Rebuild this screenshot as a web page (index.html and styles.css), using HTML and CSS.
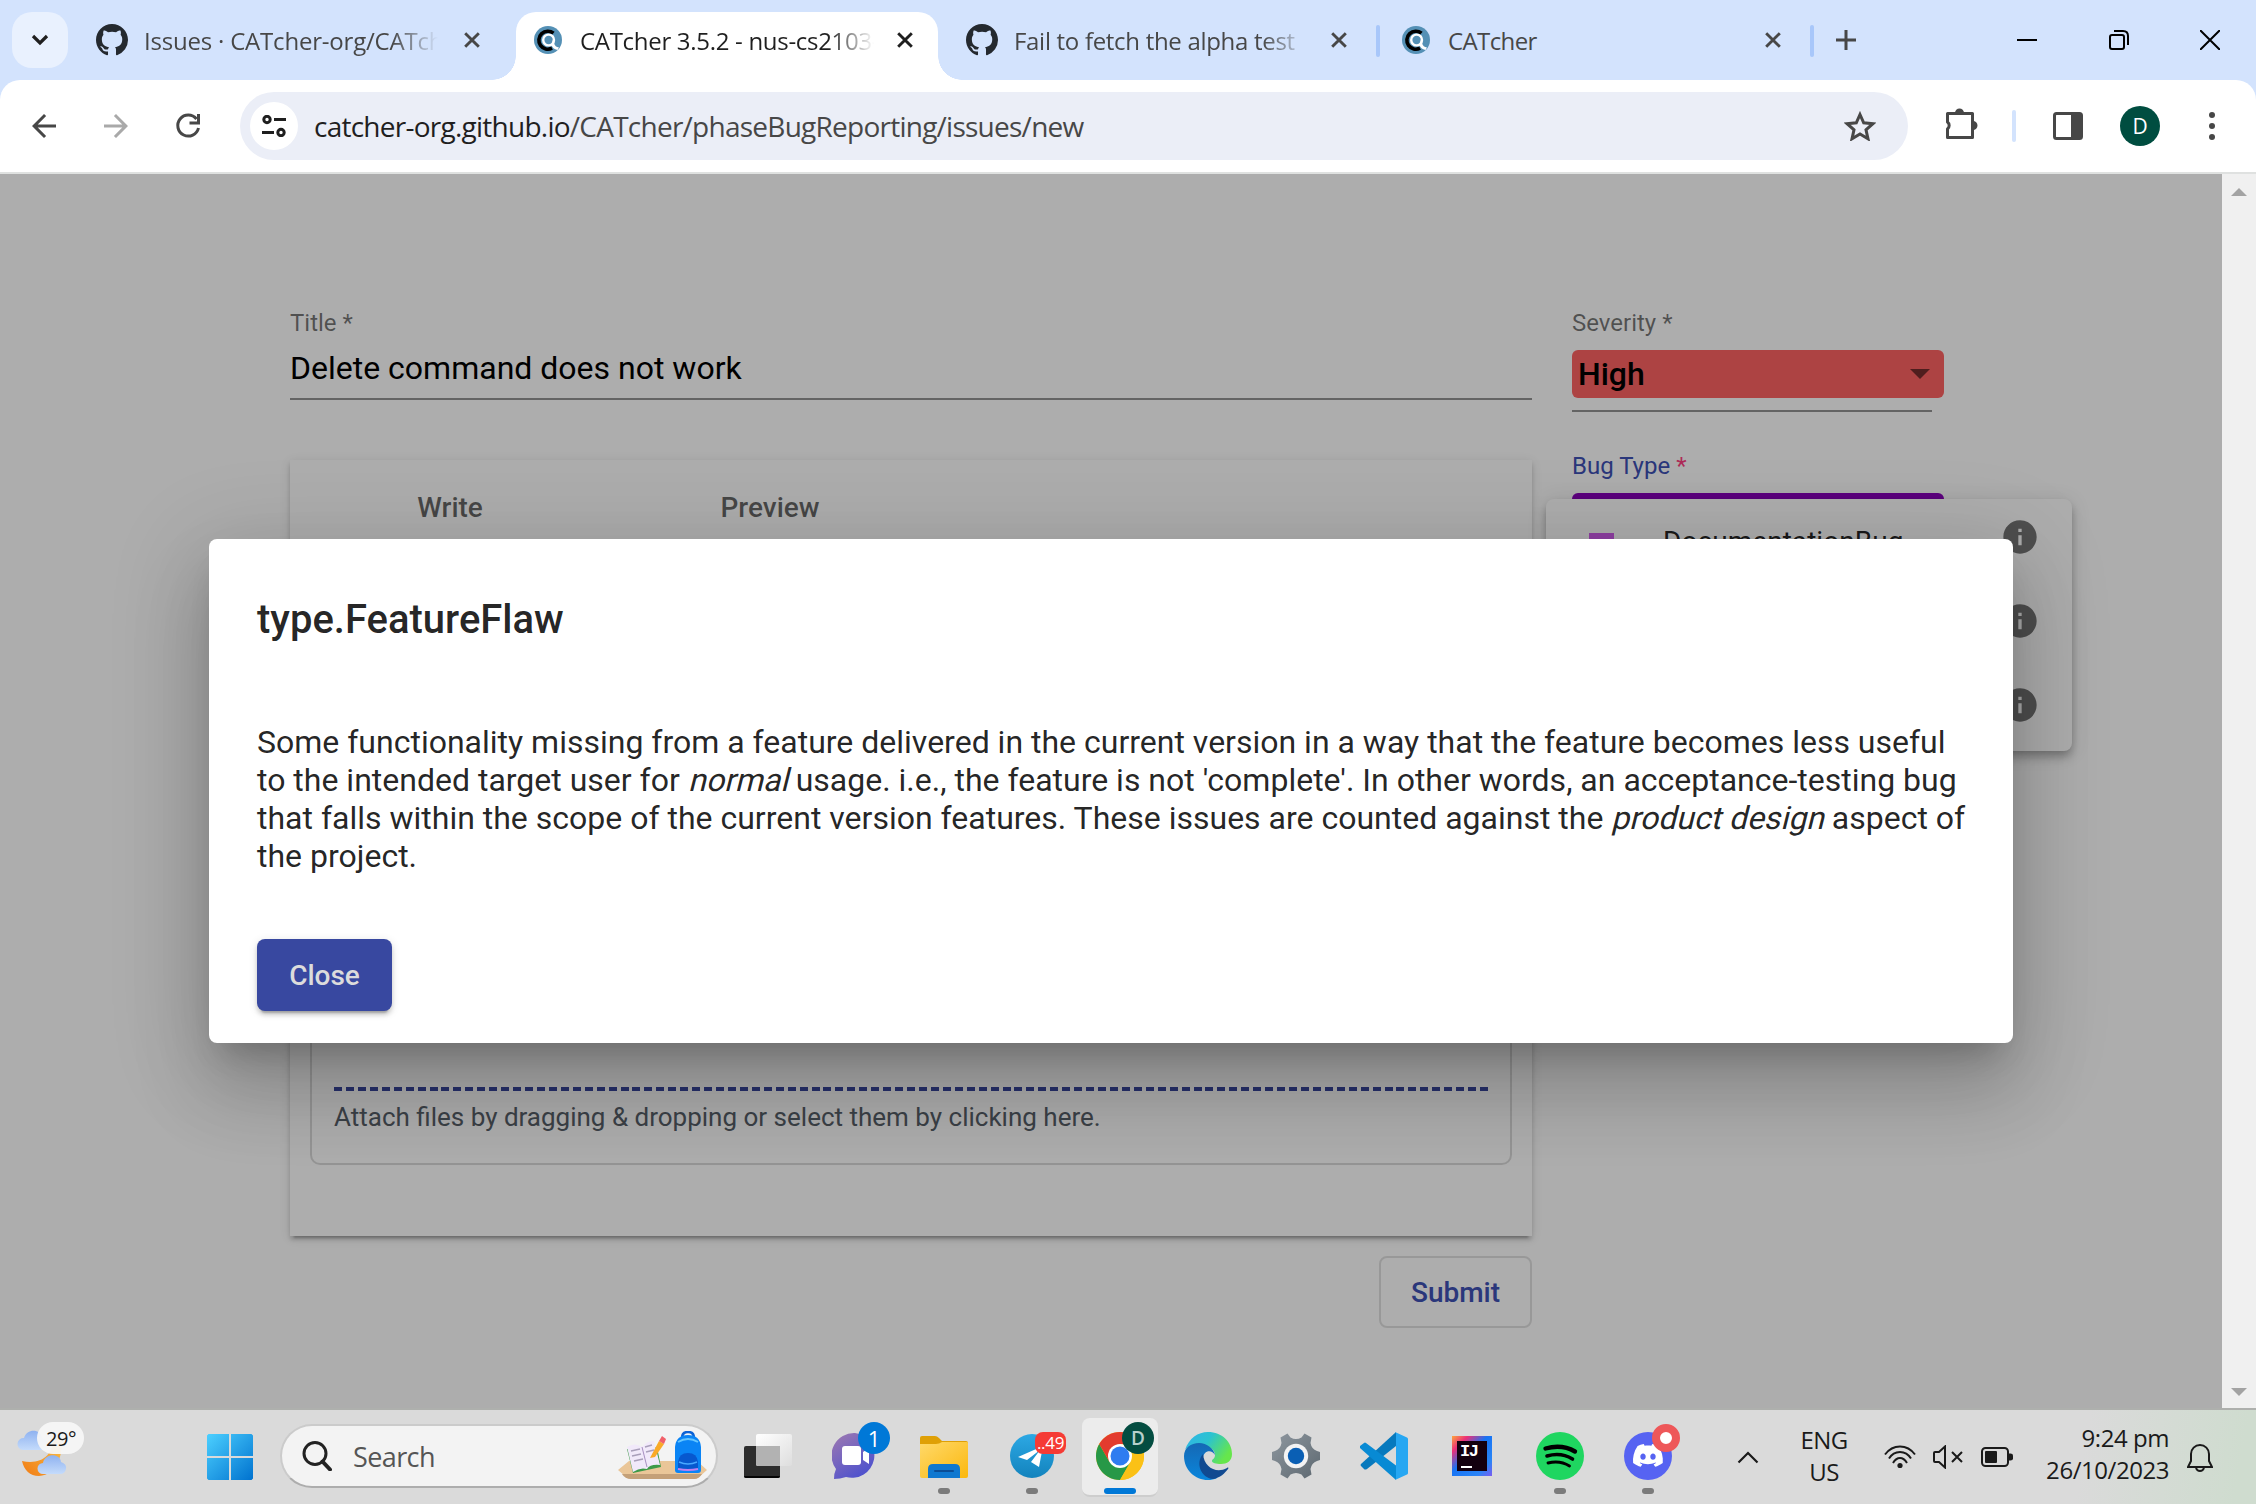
FILE: index.html
```html
<!DOCTYPE html>
<html lang="en">
<head>
<meta charset="utf-8">
<title>CATcher 3.5.2 - nus-cs2103</title>
<link rel="stylesheet" href="styles.css">
</head>
<body>
<svg class="defs" aria-hidden="true">
  <defs>
    <symbol id="github" viewBox="0 0 16 16"><path fill="#24292f" d="M8 0C3.58 0 0 3.58 0 8c0 3.54 2.29 6.53 5.47 7.59.4.07.55-.17.55-.38 0-.19-.01-.82-.01-1.49-2.01.37-2.53-.49-2.69-.94-.09-.23-.48-.94-.82-1.13-.28-.15-.68-.52-.01-.53.63-.01 1.08.58 1.23.82.72 1.21 1.87.87 2.33.66.07-.52.28-.87.51-1.07-1.78-.2-3.64-.89-3.64-3.95 0-.87.31-1.59.82-2.15-.08-.2-.36-1.02.08-2.12 0 0 .67-.21 2.2.82.64-.18 1.32-.27 2-.27.68 0 1.36.09 2 .27 1.53-1.04 2.2-.82 2.2-.82.44 1.1.16 1.92.08 2.12.51.56.82 1.27.82 2.15 0 3.07-1.87 3.75-3.65 3.95.29.25.54.73.54 1.48 0 1.07-.01 1.93-.01 2.2 0 .21.15.46.55.38A8.013 8.013 0 0016 8c0-4.42-3.58-8-8-8z"/></symbol>
    <symbol id="catcher" viewBox="0 0 28 28"><circle cx="14" cy="14" r="14" fill="#5490b5"/><path d="M19.5 7.2A9 9 0 1 0 18 22.2" fill="none" stroke="#000" stroke-width="3.6"/><circle cx="14.6" cy="14" r="5.4" fill="none" stroke="#fff" stroke-width="2.4"/><path d="M20 9v8q1 4 5 4.500l-1.500 2.500q-5-1-6-5" fill="#fff"/></symbol>
    <symbol id="x" viewBox="0 0 16 16"><path d="M1.200 1.200l13.600 13.600M14.800 1.200L1.200 14.800" fill="none" stroke="currentColor" stroke-width="2.900"/></symbol>
    <symbol id="info" viewBox="0 0 24 24"><path fill="#757575" d="M12 2C6.480 2 2 6.480 2 12s4.480 10 10 10 10-4.480 10-10S17.520 2 12 2zm1 15h-2v-6h2v6zm0-8h-2V7h2v2z"/></symbol>
  </defs>
</svg>

<header class="browser">
  <div class="tabstrip">
    <div class="tab-search"><svg width="18" height="12" viewBox="0 0 18 12"><path d="M2 2l7 7 7-7" fill="none" stroke="#1f1f1f" stroke-width="3.200"/></svg></div>
    <div class="tab tab-first"><span class="fav"><svg width="32" height="32"><use href="#github"/></svg></span><span class="tab-text t1">Issues · CATcher-org/CATch</span><svg class="close" width="16" height="16"><use href="#x"/></svg></div>
    <div class="tab active"><span class="fav"><svg width="28" height="28"><use href="#catcher"/></svg></span><span class="tab-text t2">CATcher 3.5.2 - nus-cs2103-</span><svg class="close" width="16" height="16"><use href="#x"/></svg></div>
    <div class="tab divided"><span class="fav"><svg width="32" height="32"><use href="#github"/></svg></span><span class="tab-text t3">Fail to fetch the alpha test</span><svg class="close" width="16" height="16"><use href="#x"/></svg></div>
    <div class="tab tab-last divided"><span class="fav"><svg width="28" height="28"><use href="#catcher"/></svg></span><span class="tab-text t4">CATcher</span><svg class="close" width="16" height="16"><use href="#x"/></svg></div>
    <svg class="plus" width="20" height="20"><path d="M10 0v20M0 10h20" stroke="#474747" stroke-width="3"/></svg>
    <div class="window-buttons">
      <svg width="20" height="20"><path d="M0 10h20" stroke="#000" stroke-width="2"/></svg>
      <svg width="20" height="20" fill="none" stroke="#000" stroke-width="2"><rect x="1" y="5" width="14" height="14" rx="2"/><path d="M5 1h9q5 0 5 5v9"/></svg>
      <svg width="20" height="20"><path d="M0 0l20 20M20 0L0 20" stroke="#000" stroke-width="2"/></svg>
    </div>
  </div>
  <div class="toolbar-wrap">
    <div class="toolbar">
      <svg class="nav" width="36" height="36" viewBox="0 0 24 24"><path fill="#474747" d="M20 11H7.830l5.590-5.590L12 4l-8 8 8 8 1.410-1.410L7.830 13H20v-2z"/></svg>
      <svg class="nav" width="36" height="36" viewBox="0 0 24 24"><path fill="#a9a9a9" d="M4 13h12.170l-5.590 5.590L12 20l8-8-8-8-1.410 1.410L16.170 11H4v2z"/></svg>
      <svg class="nav" width="36" height="36" viewBox="0 0 36 36"><path d="M26.500 11A10.500 10.500 0 1 0 28.500 20" fill="none" stroke="#474747" stroke-width="3"/><path d="M28.500 6v9H19.500" fill="none" stroke="#474747" stroke-width="3"/></svg>
      <div class="omnibox">
        <span class="site"><svg width="24" height="22" viewBox="0 0 24 22" fill="none" stroke="#1f1f1f" stroke-width="3"><circle cx="5" cy="4.500" r="3.200"/><path d="M12 4.500h12M0 17.500h12"/><circle cx="19" cy="17.500" r="3.200"/></svg></span>
        <span class="url"><b>catcher-org.github.io</b>/CATcher/phaseBugReporting/issues/new</span>
        <svg class="star" width="32" height="30" viewBox="0 0 32 30"><path d="M16 3.500l3.700 8.300 9.200.9-6.900 6.100 2 9L16 23l-8 4.800 2-9-6.900-6.100 9.200-.9z" fill="none" stroke="#474747" stroke-width="3"/></svg>
      </div>
      <svg class="puzzle" width="34" height="34" viewBox="0 0 34 34"><path d="M3.500 6.500h25v24h-25v-8.500a4.500 4.500 0 0 0 0-7z" fill="none" stroke="#474747" stroke-width="3" stroke-linejoin="round"/><path d="M11 6a4.500 4.500 0 0 1 9 0zM29 14a4.500 4.500 0 0 1 0 9z" fill="#474747"/></svg>
      <span class="bar"></span>
      <svg class="panel-icon" width="30" height="28"><rect x="1.500" y="1.500" width="27" height="25" rx="2" fill="none" stroke="#474747" stroke-width="3"/><path d="M18 1h10v26H18z" fill="#474747"/></svg>
      <span class="avatar">D</span>
      <svg class="dots" width="6" height="28" fill="#474747"><circle cx="3" cy="3" r="3"/><circle cx="3" cy="14" r="3"/><circle cx="3" cy="25" r="3"/></svg>
    </div>
  </div>
</header>

<div class="viewport">
  <main class="page">
    <section class="main-col">
      <label class="label">Title *</label>
      <div class="input">Delete command does not work</div>
      <div class="line"></div>
      <div class="card">
        <div class="tabs"><span>Write</span><span>Preview</span></div>
        <div class="editor">
          <div class="dashes"></div>
          <div class="attach">Attach files by dragging &amp; dropping or select them by clicking here.</div>
        </div>
      </div>
      <div class="actions"><button class="submit">Submit</button></div>
    </section>
    <aside class="side-col">
      <label class="label">Severity *</label>
      <div class="select high">High<i class="arrow"></i></div>
      <div class="line"></div>
      <label class="label bug">Bug Type <em>*</em></label>
      <div class="select purple"></div>
    </aside>
    <div class="options">
      <div class="option"><i class="swatch"></i><span>DocumentationBug</span><svg width="40" height="40"><use href="#info"/></svg></div>
      <div class="option"><svg width="40" height="40"><use href="#info"/></svg></div>
      <div class="option"><svg width="40" height="40"><use href="#info"/></svg></div>
    </div>
    <div class="backdrop"></div>
    <div class="dialog">
      <h2>type.FeatureFlaw</h2>
      <p>Some functionality missing from a feature delivered in the current version in a way that the feature becomes less useful<br>to the intended target user for <i>normal</i> usage. i.e., the feature is not 'complete'. In other words, an acceptance-testing bug<br>that falls within the scope of the current version features. These issues are counted against the <i>product design</i> aspect of<br>the project.</p>
      <button class="close-btn">Close</button>
    </div>
  </main>
  <div class="scrollbar"><i class="up"></i><i class="down"></i></div>
</div>

<footer class="taskbar">
  <div class="weather">
    <svg width="70" height="64" viewBox="0 0 70 64">
      <defs><linearGradient id="moon" x1="0" y1="1" x2="1" y2="0"><stop offset="0" stop-color="#f07a13"/><stop offset="1" stop-color="#fbc44a"/></linearGradient><linearGradient id="cloud" x1="0" y1="0" x2="0" y2="1"><stop offset="0" stop-color="#8fb2f0"/><stop offset="1" stop-color="#c4dbfb"/></linearGradient></defs>
      <path d="M47 14c3 14-4 36-22 37-9 0-15-6-17-15 18 4 32-5 31-24z" fill="url(#moon)"/>
      <path d="M9 25a6 6 0 0 1 1-12C13 3 27 4 28 13q8 2 7 12z" fill="url(#cloud)"/>
      <path d="M29 49a5.500 5.500 0 0 1 0-11c2-10 17-10 18-1q6 2 5 7-1 5-6 5z" fill="url(#cloud)"/>
    </svg>
    <span class="temp">29°</span>
  </div>
  <svg class="start" width="46" height="46" viewBox="0 0 46 46"><defs><linearGradient id="win" x1="0" y1="0" x2="1" y2="1" gradientUnits="objectBoundingBox"><stop offset="0" stop-color="#4cd0ff"/><stop offset="1" stop-color="#0072cf"/></linearGradient></defs><path fill="url(#win)" d="M1.500 0H22v22H0V1.500zM24 0h20.500L46 1.500V22H24zM0 24h22v22H1.500L0 44.500zM24 24h22v20.500L44.500 46H24z"/></svg>
  <div class="search">
    <svg width="30" height="30" viewBox="0 0 30 30" fill="none" stroke="#222"><circle cx="13" cy="12.500" r="11" stroke-width="3"/><path d="M20.500 20.500L28 28.500" stroke-width="4" stroke-linecap="round"/></svg>
    <span>Search</span>
    <svg class="school" width="92" height="50" viewBox="0 0 92 50">
      <path d="M12 30h68l10 9-8 7q-2 2-5 2H16q-5 0-8-3l-7-6z" fill="#eac698"/><path d="M5 43h80q-3 5-8 5H14q-6 0-9-5z" fill="#c4a078"/>
      <path d="M10 18l30-2 4 20-28 6z" fill="#3d9a49"/><path d="M10 16q8-5 15 0 6-7 12-6l6 24q-10-1-13 4-7-2-14 3z" fill="#f1e9fa"/><path d="M25 16l5 20" stroke="#a78fc0"/><path d="M14 20l9-2M15 25l9-2M17 30l9-2M28 16l7-2M29 21l8-2" stroke="#a99fba" stroke-width="1.500"/>
      <path d="M34 25l8-15 5 3-9 13-5 1z" fill="#f9a928"/><path d="M42 10l3-5 4 3-2 5z" fill="#f1606a"/>
      <path d="M65 7q0-6 6-6t6 6" fill="none" stroke="#0b62d6" stroke-width="2.500"/><path d="M58 16q1-12 13-12t13 12v23q0 3-3 3H61q-3 0-3-3z" fill="#0a84f5"/><path d="M61 11q10-6 20 0" fill="none" stroke="#65c6ff" stroke-width="2"/><path d="M61 31q1-9 10-9t10 9v8H61z" fill="#0758cf"/><path d="M62 31q9 4 18 0" fill="none" stroke="#49a8ff" stroke-width="1.500"/><path d="M61 38q10 2 20 0" fill="none" stroke="#c080f0" stroke-width="2"/>
    </svg>
  </div>
  <nav class="apps">
    <div class="app"><svg width="48" height="48" viewBox="0 0 48 48"><defs><linearGradient id="tv" x1="0" y1="0" x2="1" y2="1"><stop offset="0" stop-color="#fff"/><stop offset="1" stop-color="#dedede"/></linearGradient></defs><rect y="14" width="36" height="32" rx="2" fill="#2d2d2d"/><path d="M0 44h36v0q0 2-2 2H2q-2 0-2-2z" fill="#050505"/><rect x="12" y="2" width="36" height="32" rx="2" fill="url(#tv)"/><path d="M12 14h24v20H14q-2 0-2-2z" fill="#b2b2b2"/></svg></div>
    <div class="app"><svg width="48" height="48" viewBox="0 0 48 48"><defs><linearGradient id="teams" x1="0" y1="0" x2=".6" y2="1"><stop offset="0" stop-color="#a07ab0"/><stop offset="1" stop-color="#4f52cd"/></linearGradient></defs><path d="M23 1a22.500 22.500 0 1 1-9 44q-6 2-12 2 0-6 2-10A22.500 22.500 0 0 1 23 1z" fill="url(#teams)"/><rect x="10" y="14" width="19" height="19" rx="3" fill="#fff"/><path d="M31 20l6-4v16l-6-4z" fill="#fff"/></svg><span class="badge blue">1</span></div>
    <div class="app run"><svg width="48" height="48" viewBox="0 0 48 48"><defs><linearGradient id="fold" x1="0" y1="0" x2="1" y2="1"><stop offset="0" stop-color="#ffd96a"/><stop offset="1" stop-color="#fbb80e"/></linearGradient></defs><path d="M0 12V6q0-2 2-2h13q2 0 4 2l3 3h24q2 0 2 2v5H0z" fill="#dfa006"/><path d="M0 12h16q3 0 6-2h25q1 0 1 1v33q0 2-2 2H2q-2 0-2-2z" fill="url(#fold)"/><path d="M8 46V37q0-5 5-5h22q5 0 5 5v9z" fill="#0f78d0"/><path d="M15 39h18" stroke="#0a4d96" stroke-width="2" stroke-linecap="round"/></svg></div>
    <div class="app run"><svg width="48" height="48" viewBox="0 0 48 48"><defs><linearGradient id="tg" x1="0" y1="0" x2="0" y2="1"><stop offset="0" stop-color="#2ca8e4"/><stop offset="1" stop-color="#1383bd"/></linearGradient></defs><circle cx="24" cy="24" r="22" fill="url(#tg)"/><path d="M10 25L35 14l-4 21-8-5 9-12-13 10z" fill="#fff"/></svg><span class="badge red">..49</span></div>
    <div class="app current"><svg width="48" height="48" viewBox="0 0 48 48"><circle cx="24" cy="24" r="24" fill="#fbbc0c"/><path d="M24 24L44.780 12A24 24 0 0 0 3.220 12z" fill="#e33b2e"/><path d="M3.220 12A24 24 0 0 0 24 48l10.400-18L24 24 13.600 30z" fill="#279847"/><path d="M3.220 12L13.600 30 24 24V12z" fill="#e33b2e"/><path d="M24 12h20.780A24 24 0 0 1 24 48l10.400-18z" fill="#fbc116"/><circle cx="24" cy="24" r="12" fill="#fff"/><circle cx="24" cy="24" r="9.500" fill="#2f7cf0"/></svg><span class="badge green">D</span></div>
    <div class="app"><svg width="48" height="48" viewBox="0 0 48 48"><defs><linearGradient id="e1" x1="0" y1="0" x2="1" y2=".5"><stop offset="0" stop-color="#2fb4ea"/><stop offset=".5" stop-color="#2cc3cf"/><stop offset="1" stop-color="#66e64c"/></linearGradient><linearGradient id="e2" x1="0" y1="0" x2="0" y2="1"><stop offset="0" stop-color="#1568b4"/><stop offset="1" stop-color="#0a86dc"/></linearGradient></defs><path d="M1 18C5 6 14 0 24 0c14 0 24 10 24 22 0 7-5 10-11 10-5 0-9-1-9-3s3-2 3-6c0-5-5-9-12-9C11 12 4 14 1 18z" fill="url(#e1)"/><path d="M0 24c0-8 7-13 15-13s15 6 16 12c-3-6-12-5-12 4 0 8 6 18 14 19-3 1.500-6 2-9 2C11 48 0 38 0 24z" fill="url(#e2)"/><path d="M19 22c-8 9-2 24 10 25 7-1 12-6 15-10 1-1 0-2-1-1-11 6-23-1-24-14z" fill="#114a91"/></svg></div>
    <div class="app"><svg width="48" height="48" viewBox="0 0 48 48"><defs><linearGradient id="gear" x1="0" y1="0" x2="1" y2="1"><stop offset="0" stop-color="#8e979f"/><stop offset="1" stop-color="#5d6870"/></linearGradient></defs><path d="M15.500 1.500l3 4q5.500 3 11 0l3-4 7 4-1 5.500q1 6 6.500 8l3 1v8l-3 1q-5.500 2-6.500 8l1 5.500-7 4-3-4q-5.500-3-11 0l-3 4-7-4 1-5.500q-1-6-6.500-8l-3-1v-8l3-1q5.500-2 6.500-8l-1-5.500z" fill="url(#gear)"/><circle cx="24" cy="24" r="12.200" fill="#f3f3f3"/><circle cx="24" cy="24" r="8.200" fill="#0a5fb4"/></svg></div>
    <div class="app"><svg width="48" height="48" viewBox="0 0 48 48"><path d="M36 0L1 32q-1 1 0 2l3 3q1 1 3 0L36 14z" fill="#0779bd"/><path d="M36 48L0 16q-1-1 0-2l4-3q1-1 2 0l30 22.500z" fill="#088ad4"/><path d="M35 0l12 5.500q1 .5 1 1.500v34q0 1-1 1.500L35 48q1-.5 1-2V2q0-1.500-1-2z" fill="#27a7f2"/></svg></div>
    <div class="app"><svg width="48" height="48" viewBox="0 0 48 48"><defs><linearGradient id="ij" x1="0" y1="0" x2="1" y2="1"><stop offset="0" stop-color="#fda63c"/><stop offset=".2" stop-color="#ec2f78"/><stop offset=".45" stop-color="#1774f4"/><stop offset=".8" stop-color="#2a84f6"/><stop offset="1" stop-color="#7b5cf0"/></linearGradient></defs><rect x="4" y="4" width="40" height="40" fill="url(#ij)"/><rect x="9" y="9" width="30" height="30" fill="#14000f"/><path d="M13 35h11" stroke="#fff" stroke-width="2"/><text x="12" y="24" class="ij">IJ</text></svg></div>
    <div class="app run"><svg width="48" height="48" viewBox="0 0 48 48"><circle cx="24" cy="24" r="24" fill="#1fd660"/><g fill="none" stroke="#000" stroke-linecap="round"><path d="M9.500 16.500Q26 12 39 19.500" stroke-width="4.400"/><path d="M11 24q14-4 25.500 3" stroke-width="3.600"/><path d="M12 31q12-3 21.500 3" stroke-width="2.900"/></g></svg></div>
    <div class="app run"><svg width="48" height="48" viewBox="0 0 48 48"><circle cx="24" cy="24" r="24" fill="#5663f2"/><path transform="translate(9 8.500) scale(1.250)" fill="#fff" d="M20.317 4.370a19.790 19.790 0 0 0-4.885-1.515c-.3.300-.5.900-.687 1.287-1.845-.276-3.680-.276-5.487 0-.164-.393-.406-.874-.696-1.287A19.740 19.740 0 0 0 3.677 4.370C.533 9.046-.319 13.580.099 18.058c2.053 1.508 4.041 2.423 6.077 3.029.5-.6.900-1.300 1.226-1.994-.7-.3-1.300-.6-1.914-.998l.364-.419c3.928 1.793 8.180 1.793 12.139 0l.373.302c-.6.400-1.200.7-1.873 1.020.3.700.7 1.400 1.268 2.100 1.961-.607 3.950-1.522 6.034-3.030.5-5.177-.838-9.674-3.476-13.698zM8.020 15.331c-1.182 0-2.157-1.086-2.157-2.419s.956-2.419 2.157-2.419c1.211 0 2.176 1.095 2.157 2.419 0 1.333-.956 2.419-2.157 2.419zm7.975 0c-1.183 0-2.157-1.086-2.157-2.419s.955-2.419 2.157-2.419c1.211 0 2.176 1.095 2.157 2.419 0 1.333-.946 2.419-2.157 2.419z"/></svg><span class="badge ring"></span></div>
  </nav>
  <div class="tray">
    <svg class="chev" width="22" height="13"><path d="M1.500 11.500L11 2l9.500 9.500" fill="none" stroke="#1a1a1a" stroke-width="2.200"/></svg>
    <div class="lang">ENG<br>US</div>
    <svg class="wifi" width="32" height="24" viewBox="0 0 32 24" fill="none" stroke="#1a1a1a" stroke-width="2"><path d="M1 9.500Q7 1.500 16 1.500T31 9.500M5 13.500Q9 7 16 7t11 6.500M9 18q3-5 7-5t7 5"/><circle cx="16" cy="20.500" r="2.600" fill="#1a1a1a" stroke="none"/></svg>
    <svg class="sound" width="30" height="24" viewBox="0 0 30 24" fill="none" stroke="#1a1a1a" stroke-width="2"><path d="M1 8q0-1 1-1h4l6-5.500v21L6 17H2q-1 0-1-1zM19 7l10 10M29 7L19 17"/></svg>
    <svg class="battery" width="32" height="20" viewBox="0 0 32 20"><rect x="1" y="1" width="26" height="18" rx="3.500" fill="none" stroke="#1a1a1a" stroke-width="2"/><rect x="4" y="4" width="12" height="12" rx="1" fill="#1a1a1a"/><path d="M28 6.500h1.500q2.500 0 2.500 2v3q0 2-2.500 2H28z" fill="#1a1a1a"/></svg>
    <div class="clock">9:24 pm<br>26/10/2023</div>
    <svg class="bell" width="26" height="29" viewBox="0 0 26 29" fill="none" stroke="#1a1a1a" stroke-width="2"><path d="M4 11a9 9 0 0 1 18 0v7l3 6H1l3-6zM9 25q1 3 4 3t4-3"/></svg>
  </div>
</footer>
</body>
</html>
```
FILE: styles.css
```css
* { box-sizing: border-box; }
body { margin: 0; width: 2256px; height: 1504px; overflow: hidden; font-family: Roboto, "Liberation Sans", sans-serif; }
svg { display: block; flex: none; }
button { font: inherit; margin: 0; padding: 0; }
.defs { position: absolute; width: 0; height: 0; }

/* browser frame */
.browser, .taskbar { font-family: "Open Sans", "Noto Sans", sans-serif; }
.browser { height: 174px; background: #d3e3fd; }
.tabstrip { display: flex; align-items: center; height: 80px; padding-left: 12px; }
.tab-search { width: 56px; height: 56px; border-radius: 20px; background: #e9f1fe; display: flex; align-items: center; justify-content: center; }
.tab { position: relative; display: flex; align-items: center; width: 434px; height: 68px; margin-top: 12px; padding: 0 0 12px 16px; color: #474747; font-size: 24px; }
.tab-first { width: 436px; margin-left: 12px; }
.tab-last { width: 430px; }
.fav { width: 32px; display: flex; justify-content: center; }
.tab-text { width: 298px; margin: 2px 19px 0 16px; line-height: 40px; white-space: nowrap; mask-image: linear-gradient(to right, #000 248px, transparent 294px); letter-spacing: -0.3px; }
.t1 { margin-right: 22px; letter-spacing: -0.2px; }
.t4 { mask-image: none; letter-spacing: -0.6px; }
.active { width: 422px; margin-right: 12px; background: #fff; color: #1f1f1f; border-radius: 20px 20px 0 0; }
.active::before, .active::after { content: ""; position: absolute; bottom: 0; width: 24px; height: 24px; }
.active::before { left: -24px; background: radial-gradient(circle at 0 0, transparent 23.500px, #fff 24px); }
.active::after { right: -24px; background: radial-gradient(circle at 100% 0, transparent 23.500px, #fff 24px); }
.divided::after { content: ""; position: absolute; right: 4px; top: 13px; width: 4px; height: 32px; border-radius: 2px; background: #a8c7fa; }
.tab-last::after { right: 0; }
.plus { margin-left: 22px; }
.window-buttons { display: flex; gap: 71.500px; margin-left: 161px; }

.toolbar-wrap { height: 94px; border-bottom: 2px solid #dfe1e0; background: #fff; border-radius: 20px 20px 0 0; }
.toolbar { display: flex; align-items: center; height: 92px; padding-left: 26px; }
.nav { margin-right: 36px; }
.omnibox { display: flex; align-items: center; width: 1668px; height: 68px; margin-left: -2px; padding: 0 32px 0 10px; border-radius: 34px; background: #ebeef7; }
.site { width: 48px; height: 48px; border-radius: 50%; background: #fff; display: flex; align-items: center; justify-content: center; }
.url { flex: 1; margin-left: 16px; font-size: 28px; letter-spacing: -0.750px; color: #474747; white-space: nowrap; }
.url b { font-weight: 400; color: #1f1f1f; }
.puzzle { margin: -4px 0 0 36px; }
.bar { width: 4px; height: 32px; margin: 0 37px 0 34px; border-radius: 2px; background: #d3e3fd; }
.avatar { width: 40px; height: 40px; margin: 0 49px 0 37px; border-radius: 50%; background: #004d40; color: #fff; font-size: 21px; line-height: 40px; text-align: center; }

/* web page */
.viewport { display: flex; height: 1236px; border-bottom: 2px solid #aeb0ad; }
.page { position: relative; display: flex; gap: 40px; width: 2222px; padding: 135px 0 0 290px; background: #fff; overflow: hidden; }
.main-col { width: 1242px; }
.side-col { width: 372px; }
.label { display: block; font-size: 24px; line-height: 28px; color: rgba(0,0,0,.54); }
.input { margin: 12px 0 11px; font-size: 32px; line-height: 38px; color: #000; }
.line { height: 2px; background: rgba(0,0,0,.42); }
.card { height: 776px; margin-top: 60px; padding: 0 20px; background: #fff; box-shadow: 0 6px 2px -4px rgba(0,0,0,.2), 0 4px 4px rgba(0,0,0,.14), 0 2px 10px rgba(0,0,0,.12); }
.tabs { display: flex; height: 116px; margin: 0 -20px; font-size: 28px; font-weight: 500; line-height: 96px; color: rgba(0,0,0,.6); }
.tabs span { width: 320px; text-align: center; }
.editor { display: flex; flex-direction: column; justify-content: flex-end; height: 589px; padding: 0 22px 26px; border: 2px solid rgba(0,0,0,.14); border-radius: 10px; }
.dashes { height: 4px; background: repeating-linear-gradient(to right, #3848a0 0 8px, transparent 8px 11.938px); }
.attach { font-size: 26px; line-height: 32px; margin-top: 10px; padding-bottom: 4px; color: #586069; }
.actions { display: flex; justify-content: flex-end; margin-top: 20px; }
.submit { width: 153px; height: 72px; border: 2px solid rgba(0,0,0,.12); border-radius: 8px; background: transparent; color: #3f51b5; font-size: 28px; font-weight: 500; }
.select { display: flex; align-items: center; height: 48px; border-radius: 6px; }
.high { justify-content: space-between; margin: 13px 0 12px; padding: 0 14px 0 6px; background: #ff6363; font-size: 32px; font-weight: 500; }
.arrow { border: 10px solid transparent; border-top-color: rgba(0,0,0,.54); border-bottom: 0; }
.side-col .line { width: 360px; }
.bug { margin-top: 40px; color: #3f51b5; }
.bug em { font-style: normal; color: #ff4081; }
.purple { margin-top: 13px; background: #8b00bd; }
.options { position: absolute; left: 1546px; top: 325px; width: 526px; height: 252px; border-radius: 8px; background: #fff; box-shadow: 0 4px 8px -2px rgba(0,0,0,.2), 0 8px 10px rgba(0,0,0,.14), 0 2px 20px rgba(0,0,0,.12); }
.option { display: flex; align-items: center; justify-content: flex-end; height: 84px; padding: 0 32px 8px 43px; font-size: 28px; color: rgba(0,0,0,.87); }
.option span { flex: 1; margin-left: 49px; padding-top: 9px; letter-spacing: 0.050px; }
.swatch { width: 25px; height: 25px; margin-top: 16px; background: #d25eed; }
.backdrop { position: absolute; inset: 0; background: rgba(0,0,0,.32); }
.dialog { position: absolute; left: 209px; top: 365px; width: 1804px; height: 504px; padding: 49px 48px 48px; border-radius: 8px; background: #fff; color: rgba(0,0,0,.87); box-shadow: 0 22px 30px -14px rgba(0,0,0,.2), 0 48px 76px 6px rgba(0,0,0,.14), 0 18px 92px 16px rgba(0,0,0,.12); }
.dialog h2 { margin: 0 0 71px; font-size: 40px; font-weight: 500; line-height: 64px; }
.dialog p { margin: 0 0 64px; font-size: 32px; line-height: 38px; white-space: nowrap; }
.dialog p i { display: inline-block; font-style: normal; transform: skewX(-14deg); transform-origin: 50% 79%; }
.close-btn { width: 135px; height: 72px; border: 0; border-radius: 8px; background: #3848a0; color: #dcdcdc; font-size: 28px; font-weight: 500; box-shadow: 0 6px 2px -4px rgba(0,0,0,.2), 0 4px 4px rgba(0,0,0,.14), 0 2px 10px rgba(0,0,0,.12); }
.scrollbar { width: 34px; padding: 14px 9px 12px; background: #f0f0f0; display: flex; flex-direction: column; justify-content: space-between; }
.scrollbar i { border: 8px solid transparent; }
.scrollbar .up { border-top: 0; border-bottom-color: #a3a3a3; }
.scrollbar .down { border-bottom: 0; border-top-color: #a3a3a3; }

/* taskbar */
.taskbar { display: flex; align-items: center; height: 94px; background: linear-gradient(100deg, #dadada 92%, #cfdccf 99%); color: #1a1a1a; }
.weather { position: relative; width: 207px; padding-left: 14px; }
.temp { position: absolute; left: 37px; top: -3px; width: 47px; height: 32px; border-radius: 16px; background: rgba(246,246,246,.94); font-size: 20px; line-height: 33px; text-align: center; letter-spacing: -0.5px; padding-left: 1px; }
.search { display: flex; align-items: center; width: 438px; height: 64px; margin: -2px 6px 0 27px; padding: 0 7px 0 20px; border: 2px solid #cbcbcb; border-bottom-color: #adadad; border-radius: 32px; background: #f3f3f3; font-size: 27px; color: #555; }
.search span { flex: 1; margin-left: 21px; letter-spacing: -0.6px; }
.apps { display: flex; }
.app { position: relative; width: 88px; height: 94px; padding: 22px 20px; }
.current::before { content: ""; position: absolute; left: 6px; top: 8px; width: 76px; height: 77px; border-radius: 8px; background: #ececec; border-bottom: 2px solid #cdcdcd; }
.current svg { position: relative; }
.run::after, .current::after { content: ""; position: absolute; left: 38px; top: 78px; width: 12px; height: 6px; border-radius: 3px; background: #7b7b7b; }
.current::after { left: 28px; width: 32px; background: #0078d7; }
.badge { position: absolute; left: 46px; top: 12px; width: 32px; height: 32px; border-radius: 50%; color: #fff; text-align: center; line-height: 32px; font-size: 22px; }
.blue { background: #0078d7; }
.red { left: 47px; width: 31px; top: 22px; height: 22px; border-radius: 8px; background: #f53b35; font-size: 17px; line-height: 22px; letter-spacing: -0.3px; }
.green { background: #044d41; color: #b8d0cc; font-size: 19px; font-weight: 600; }
.ring { left: 48px; top: 14px; width: 28px; height: 28px; border: 8px solid #ee5759; background: #fff; }
.ij { font: 700 17px "Liberation Mono", monospace; fill: #fff; letter-spacing: -1.500px; }
.tray { display: flex; align-items: center; margin-left: 45px; font-size: 24px; line-height: 32px; }
.lang { width: 60px; margin-left: 35px; margin-top: -2px; text-align: center; letter-spacing: -0.6px; }
.wifi { margin-left: 30px; }
.sound { margin-left: 17px; }
.battery { margin-left: 18px; }
.clock { width: 130px; margin-left: 26px; margin-top: -6px; text-align: right; letter-spacing: -0.450px; white-space: nowrap; }
.bell { margin-left: 18px; }
```
